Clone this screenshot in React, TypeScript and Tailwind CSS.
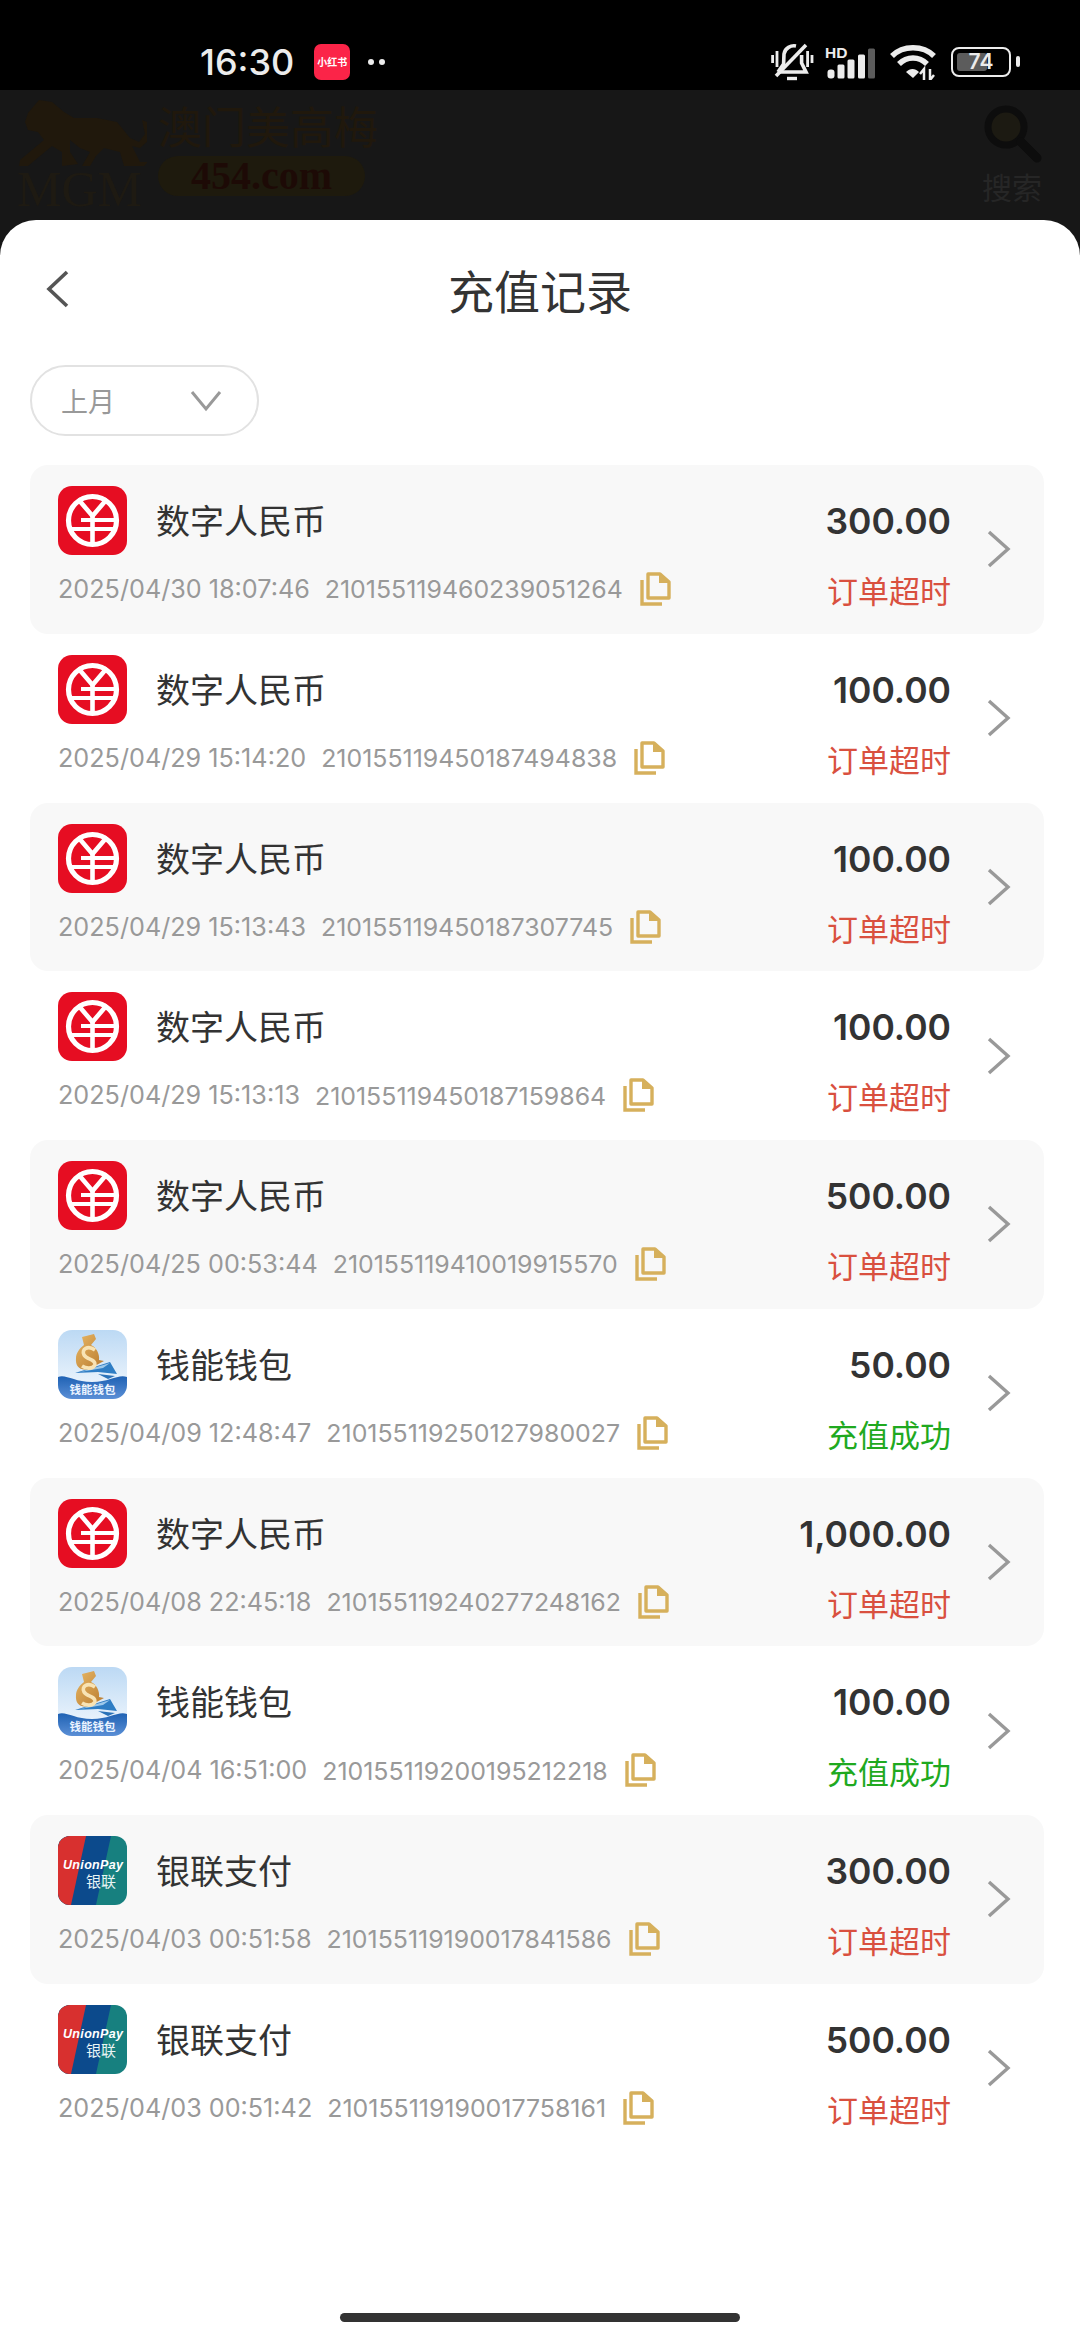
import React from "react";

type Kind = "rmb" | "wallet" | "union";
type Rec = { kind: Kind; name: string; date: string; id: string; amount: string; ok?: boolean };

const records: Rec[] = [
  { kind: "rmb", name: "数字人民币", date: "2025/04/30 18:07:46", id: "210155119460239051264", amount: "300.00" },
  { kind: "rmb", name: "数字人民币", date: "2025/04/29 15:14:20", id: "210155119450187494838", amount: "100.00" },
  { kind: "rmb", name: "数字人民币", date: "2025/04/29 15:13:43", id: "210155119450187307745", amount: "100.00" },
  { kind: "rmb", name: "数字人民币", date: "2025/04/29 15:13:13", id: "210155119450187159864", amount: "100.00" },
  { kind: "rmb", name: "数字人民币", date: "2025/04/25 00:53:44", id: "210155119410019915570", amount: "500.00" },
  { kind: "wallet", name: "钱能钱包", date: "2025/04/09 12:48:47", id: "210155119250127980027", amount: "50.00", ok: true },
  { kind: "rmb", name: "数字人民币", date: "2025/04/08 22:45:18", id: "210155119240277248162", amount: "1,000.00" },
  { kind: "wallet", name: "钱能钱包", date: "2025/04/04 16:51:00", id: "210155119200195212218", amount: "100.00", ok: true },
  { kind: "union", name: "银联支付", date: "2025/04/03 00:51:58", id: "210155119190017841586", amount: "300.00" },
  { kind: "union", name: "银联支付", date: "2025/04/03 00:51:42", id: "210155119190017758161", amount: "500.00" },
];

function RmbIcon() {
  return (
    <svg width="69" height="69" viewBox="0 0 69 69" className="block">
      <rect width="69" height="69" rx="14" fill="#e60d22" />
      <circle cx="34.5" cy="34.5" r="24" fill="none" stroke="#fff" strokeWidth="5.2" />
      <path d="M20 13 L34.5 30 L49 13" fill="none" stroke="#fff" strokeWidth="4.6" />
      <path d="M23 34 H58" stroke="#fff" strokeWidth="4" />
      <path d="M11 43 H58" stroke="#fff" strokeWidth="4" />
      <path d="M34.5 29 V58" stroke="#fff" strokeWidth="4.6" />
    </svg>
  );
}

function WalletIcon() {
  return (
    <svg width="69" height="69" viewBox="0 0 69 69" className="block">
      <defs>
        <linearGradient id="wsky" x1="0" y1="0" x2="0" y2="1">
          <stop offset="0" stopColor="#bcd9f4" />
          <stop offset="1" stopColor="#f6fafe" />
        </linearGradient>
        <linearGradient id="wband" x1="0" y1="0" x2="0" y2="1">
          <stop offset="0" stopColor="#1f62b4" />
          <stop offset="1" stopColor="#5b8fd6" />
        </linearGradient>
        <linearGradient id="wgold" x1="0" y1="0" x2="1" y2="1">
          <stop offset="0" stopColor="#e8b765" />
          <stop offset="1" stopColor="#b87a2e" />
        </linearGradient>
      </defs>
      <rect width="69" height="69" rx="14" fill="url(#wsky)" />
      <path d="M17 43 L52 32 L59 44 L40 42 Z" fill="#2e7dc4" />
      <path d="M22 42 L52 33 L45 38 Z" fill="#9cc8ea" />
      <path d="M40 44 L57 46 L50 49 Z" fill="#2a72b8" />
      <path d="M24 7 L36 4 L38 9 L33 15 C38 17 42 24 41 30 L46 31 L33 38 C24 42 17 38 18 28 C18 23 22 18 26 15 Z" fill="url(#wgold)" />
      <path d="M37 20 C30 15 23 19 26 25 C29 30 38 29 37 35 C34 40 27 38 24 36" fill="none" stroke="#f8e3b4" strokeWidth="3.6" />
      <path d="M0 47 C8 44 16 52 34 52 C52 52 60 44 69 47 V55 A14 14 0 0 1 55 69 H14 A14 14 0 0 1 0 55 Z" fill="url(#wband)" />
      <text x="34.5" y="64" textAnchor="middle" fontSize="11.5" fontWeight="700" fill="#eaf3ff" fontFamily="'Noto Sans CJK SC', sans-serif">钱能钱包</text>
    </svg>
  );
}

function UnionIcon() {
  return (
    <svg width="69" height="69" viewBox="0 0 69 69" className="block">
      <defs>
        <clipPath id="uclip">
          <rect width="69" height="69" rx="12" />
        </clipPath>
      </defs>
      <g clipPath="url(#uclip)">
        <rect width="69" height="69" fill="#17807f" />
        <path d="M0 0 H53 L38 69 H0 Z" fill="#0c4a8c" />
        <path d="M0 0 H28 L13 69 H0 Z" fill="#d8302f" />
      </g>
      <text x="5" y="33" fontSize="12.5" fontWeight="700" fontStyle="italic" fill="#fff" fontFamily="'Liberation Sans', sans-serif" textLength="60" lengthAdjust="spacing">UnionPay</text>
      <text x="28" y="51" fontSize="15" fill="#e8f4f4" fontFamily="'Noto Sans CJK SC', sans-serif">银联</text>
    </svg>
  );
}

function CopyIcon() {
  return (
    <svg width="32" height="34" viewBox="0 0 32 34" className="block shrink-0">
      <path d="M3 8 V32 H23" fill="none" stroke="#d6b05c" strokeWidth="3.4" />
      <path d="M9 2 H21 L30 10 V26 H9 Z" fill="none" stroke="#d6b05c" strokeWidth="3.4" strokeLinejoin="round" />
      <path d="M20 2 L30 11 H20 Z" fill="#d6b05c" />
    </svg>
  );
}

function Row({ r, shaded }: { r: Rec; shaded: boolean }) {
  return (
    <div className={`h-[168.75px] rounded-[18px] flex items-stretch ${shaded ? "bg-[#f8f8f8]" : "bg-white"}`}>
      <div className="flex-1 min-w-0 pl-[28px] pt-[21px]">
        <div className="flex items-center h-[69px]">
          {r.kind === "rmb" ? <RmbIcon /> : r.kind === "wallet" ? <WalletIcon /> : <UnionIcon />}
          <span className="ml-[29px] -mt-[1px] text-[34px] text-[#333333] leading-none">{r.name}</span>
        </div>
        <div className="flex items-center mt-[17px] h-[34px] text-[25.2px] text-[#999999] font-['Inter',sans-serif] whitespace-nowrap">
          <span className="mt-[2px]">{r.date}</span>
          <span className="mt-[2px] ml-[15px] text-[24.9px]">{r.id}</span>
          <span className="ml-[16px]">
            <CopyIcon />
          </span>
        </div>
      </div>
      <div className="w-[300px] flex flex-col items-end pt-[35px]">
        <span className="text-[35.5px] leading-[44px] font-semibold text-[#333333] font-['Inter',sans-serif]">{r.amount}</span>
        <span className={`mt-[24px] text-[31px] leading-[44px] ${r.ok ? "text-[#1fa91f]" : "text-[#d9503f]"}`}>
          {r.ok ? "充值成功" : "订单超时"}
        </span>
      </div>
      <div className="w-[93px] flex items-center pl-[36px]">
        <svg width="24" height="38" viewBox="0 0 24 38" fill="none" className="block">
          <path d="M2 2 L21 19 L2 36" stroke="#999999" strokeWidth="3.4" />
        </svg>
      </div>
    </div>
  );
}

export default function App() {
  return (
    <div className="w-[1080px] h-[2340px] overflow-hidden flex flex-col bg-[#171717] font-['Noto_Sans_CJK_SC',sans-serif]">
      {/* status bar */}
      <div className="h-[90px] shrink-0 bg-black flex items-center pt-[33px] pl-[200px] pr-[60px] text-[#ececec]">
        <span className="text-[36px] font-medium font-['Inter',sans-serif] leading-none">16:30</span>
        <div className="ml-[20px] w-[36px] h-[36px] rounded-[7px] bg-[#fb2448] flex items-center justify-center text-[10px] font-bold text-white leading-none whitespace-nowrap">
          小红书
        </div>
        <div className="ml-[18px] flex gap-[5px]">
          <div className="w-[6px] h-[6px] rounded-full bg-[#ececec]" />
          <div className="w-[6px] h-[6px] rounded-full bg-[#ececec]" />
        </div>
        <div className="ml-auto flex items-center">
          <svg width="46" height="42" viewBox="0 0 46 42" fill="none" stroke="#ececec" strokeWidth="3.6" className="block">
            <path d="M3.6 14 V22 M8 10 V26 M38.6 10 V26 M43 14 V22" strokeWidth="2.8" />
            <path d="M9 31 L14.6 23 L15 13 C16 7 22 4 27 5" />
            <path d="M32.6 14 V22 L37 31 H9" />
            <path d="M18 37.5 H28" strokeWidth="3.4" />
            <path d="M7 35 L37 4" />
          </svg>
          <svg width="54" height="40" viewBox="0 0 54 40" className="block ml-[10px]">
            <text x="0" y="15.5" fontSize="15.5" fontWeight="700" fill="#ececec" fontFamily="'Liberation Sans', sans-serif">HD</text>
            <rect x="2.5" y="27.5" width="7" height="9" rx="3" fill="#ececec" />
            <rect x="12.5" y="22.5" width="7" height="14" rx="1.5" fill="#ececec" />
            <rect x="22.5" y="17.5" width="7" height="19" rx="1.5" fill="#ececec" />
            <rect x="33" y="12.5" width="7" height="24" rx="1.5" fill="#ececec" />
            <rect x="43" y="6.5" width="7" height="30" rx="1.5" fill="#5c5c5c" />
          </svg>
          <svg width="48" height="36" viewBox="0 0 48 36" fill="none" className="block ml-[10px]">
            <path d="M3 12 C14 1 34 1 45 12" stroke="#ececec" strokeWidth="5.5" />
            <path d="M10 20 C18 12 30 12 38 20" stroke="#ececec" strokeWidth="5.5" />
            <path d="M17 28 L24 34 L30 28 C26 24 21 24 17 28 Z" fill="#ececec" />
            <path d="M35 36 V25 L31 30 M41 25 V36 L45 31" stroke="#ececec" strokeWidth="2.5" />
          </svg>
          <div className="ml-[14px] relative w-[60px] h-[30px] rounded-[8px] border-[2.5px] border-[#ececec] p-[4px] flex">
            <div className="w-[30px] h-full rounded-[3px] bg-[#5c5c5c]" />
            <span className="absolute inset-0 flex items-center justify-center text-[21px] font-semibold leading-none font-['Inter',sans-serif] text-[#ececec]">74</span>
          </div>
          <div className="ml-[5px] w-[4px] h-[11px] rounded-[2px] bg-[#ececec]" />
        </div>
      </div>

      {/* dimmed page header */}
      <div className="h-[130px] shrink-0 flex pl-[17px] pr-[37px] pt-[8px]">
        <div className="w-[130px] shrink-0 flex flex-col">
          <svg width="130" height="72" viewBox="5 8 130 72" className="block">
            <path d="M13 32 L16 23 L27 10 L40 12 L52 22 L62 28 L85 28 L105 32 L118 48 L127 52 L133 44 L130 30 L135 32 L137 50 L128 58 L120 56 L128 72 L136 72 L132 76 L112 76 L108 62 L92 58 L84 66 L78 76 L70 76 L78 62 L68 58 L58 50 L58 62 L66 74 L50 76 L50 62 L40 56 L16 76 L7 76 L8 70 L32 50 L26 42 L16 40 Z" fill="#20180c" />
          </svg>
          <span className="text-[50px] leading-[38px] text-[#1e1a12] font-['Liberation_Serif',serif]">MGM</span>
        </div>
        <div className="ml-[11px] flex flex-col items-start">
          <span className="text-[44px] leading-[54px] text-[#20180c] whitespace-nowrap">澳门美高梅</span>
          <div className="mt-[4px] w-[207px] h-[40px] rounded-full bg-[#1e1a0d] flex items-center justify-center">
            <span className="text-[40px] leading-none font-bold text-[#1d0a06] font-['Liberation_Serif',serif]">454.com</span>
          </div>
        </div>
        <div className="ml-auto flex flex-col items-center pt-[6px]">
          <svg width="60" height="60" viewBox="0 0 60 60" fill="none" className="block ml-[2px]">
            <circle cx="23" cy="23" r="18" fill="#1c1a12" stroke="#0d0d0d" strokeWidth="7" />
            <path d="M38 38 L54 54" stroke="#0d0d0d" strokeWidth="9" strokeLinecap="round" />
          </svg>
          <span className="mt-[2px] text-[30px] leading-[40px] text-[#262626]">搜索</span>
        </div>
      </div>

      {/* sheet */}
      <div className="flex-1 min-h-0 bg-white rounded-t-[36px] flex flex-col">
        <div className="h-[145px] shrink-0 relative flex items-center justify-center pb-[8px]">
          <svg width="26" height="38" viewBox="0 0 26 38" fill="none" className="absolute left-[45px] top-[50px]">
            <path d="M22 2 L4 19 L22 36" stroke="#555555" strokeWidth="3.6" />
          </svg>
          <span className="text-[46px] leading-none text-[#333333]">充值记录</span>
        </div>
        <div className="px-[30px]">
          <div className="w-[229px] h-[71px] rounded-full border-2 border-[#e2e2e2] flex items-center pl-[29px]">
            <span className="text-[27px] leading-none text-[#999999]">上月</span>
            <svg width="32" height="22" viewBox="0 0 32 22" fill="none" className="block ml-[75px]">
              <path d="M2 2 L16 19 L30 2" stroke="#999999" strokeWidth="3" />
            </svg>
          </div>
          <div className="mt-[29px] flex flex-col w-[1014px]">
            {records.map((r, i) => (
              <Row key={r.id} r={r} shaded={i % 2 === 0} />
            ))}
          </div>
        </div>
        <div className="mt-auto mb-[18px] self-center w-[400px] h-[9px] rounded-full bg-[#333333]" />
      </div>
    </div>
  );
}
